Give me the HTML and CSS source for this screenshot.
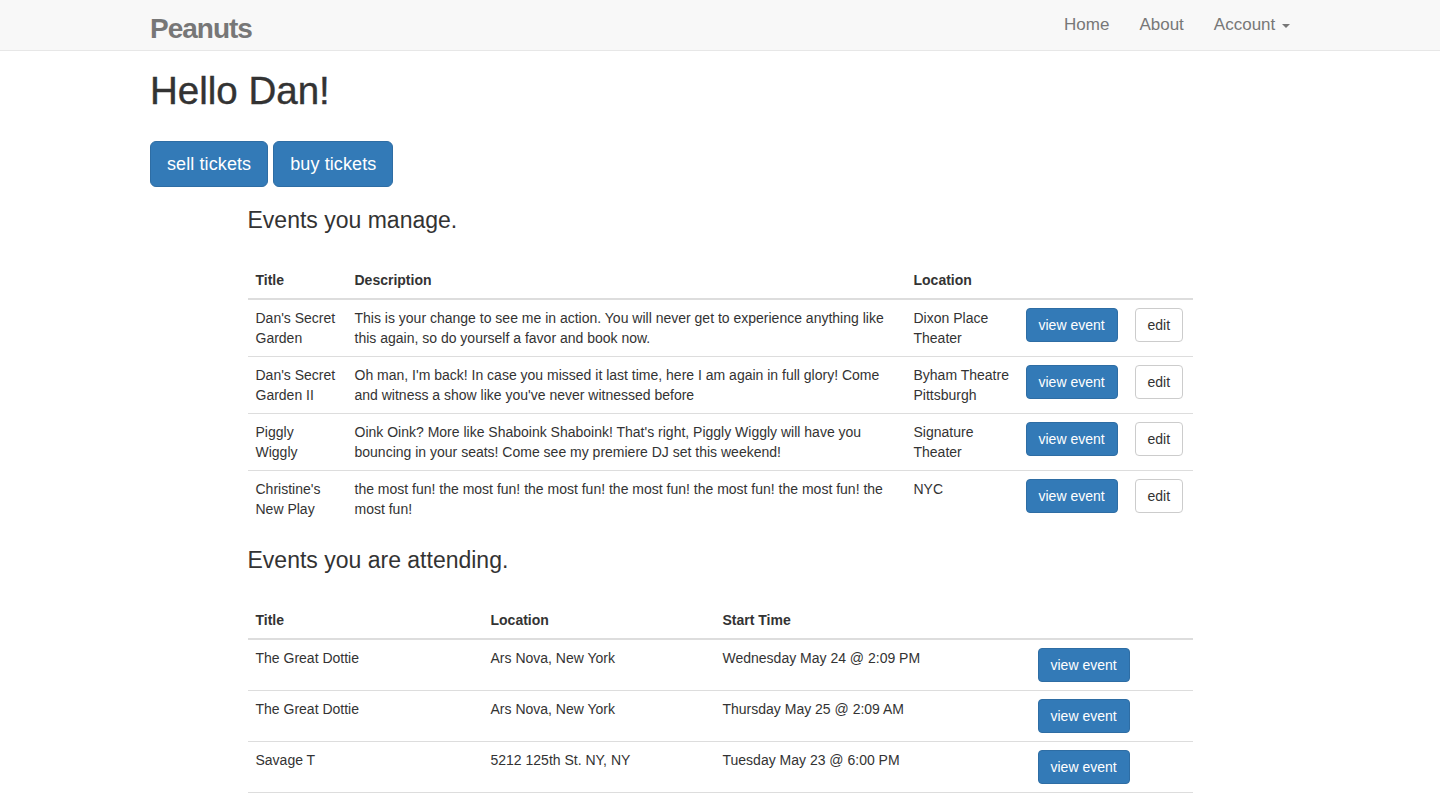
FILE: index.html
```html
<!DOCTYPE html>
<html lang="en">
<head>
<meta charset="utf-8">
<title>Peanuts</title>
<link rel="stylesheet" href="styles.css">
</head>
<body>
<nav class="navbar">
  <div class="container nav-inner">
    <a class="brand" href="#">Peanuts</a>
    <ul class="nav-links">
      <li><a href="#">Home</a></li>
      <li><a href="#">About</a></li>
      <li><a href="#">Account <span class="caret"></span></a></li>
    </ul>
  </div>
</nav>

<main class="container">
  <h1 class="greeting">Hello Dan!</h1>
  <div class="actions">
    <a class="btn btn-primary btn-lg" href="#">sell tickets</a>
    <a class="btn btn-primary btn-lg" href="#">buy tickets</a>
  </div>

  <section class="events">
    <h3 class="section-title">Events you manage.</h3>
    <table class="table">
      <colgroup>
        <col class="c-title1">
        <col class="c-desc">
        <col class="c-loc1">
        <col class="c-view1">
        <col class="c-edit">
      </colgroup>
      <thead>
        <tr><th>Title</th><th>Description</th><th>Location</th><th></th><th></th></tr>
      </thead>
      <tbody>
        <tr>
          <td>Dan's Secret Garden</td>
          <td>This is your change to see me in action. You will never get to experience anything like this again, so do yourself a favor and book now.</td>
          <td>Dixon Place Theater</td>
          <td><a class="btn btn-primary" href="#">view event</a></td>
          <td><a class="btn btn-default" href="#">edit</a></td>
        </tr>
        <tr>
          <td>Dan's Secret Garden II</td>
          <td>Oh man, I'm back! In case you missed it last time, here I am again in full glory! Come and witness a show like you've never witnessed before</td>
          <td>Byham Theatre Pittsburgh</td>
          <td><a class="btn btn-primary" href="#">view event</a></td>
          <td><a class="btn btn-default" href="#">edit</a></td>
        </tr>
        <tr>
          <td>Piggly Wiggly</td>
          <td>Oink Oink? More like Shaboink Shaboink! That's right, Piggly Wiggly will have you bouncing in your seats! Come see my premiere DJ set this weekend!</td>
          <td>Signature Theater</td>
          <td><a class="btn btn-primary" href="#">view event</a></td>
          <td><a class="btn btn-default" href="#">edit</a></td>
        </tr>
        <tr>
          <td>Christine's New Play</td>
          <td>the most fun! the most fun! the most fun! the most fun! the most fun! the most fun! the most fun!</td>
          <td>NYC</td>
          <td><a class="btn btn-primary" href="#">view event</a></td>
          <td><a class="btn btn-default" href="#">edit</a></td>
        </tr>
      </tbody>
    </table>

    <h3 class="section-title">Events you are attending.</h3>
    <table class="table table-attending">
      <colgroup>
        <col class="c-title2">
        <col class="c-loc2">
        <col class="c-time">
        <col class="c-view2">
      </colgroup>
      <thead>
        <tr><th>Title</th><th>Location</th><th>Start Time</th><th></th></tr>
      </thead>
      <tbody>
        <tr>
          <td>The Great Dottie</td>
          <td>Ars Nova, New York</td>
          <td>Wednesday May 24 @ 2:09 PM</td>
          <td><a class="btn btn-primary" href="#">view event</a></td>
        </tr>
        <tr>
          <td>The Great Dottie</td>
          <td>Ars Nova, New York</td>
          <td>Thursday May 25 @ 2:09 AM</td>
          <td><a class="btn btn-primary" href="#">view event</a></td>
        </tr>
        <tr>
          <td>Savage T</td>
          <td>5212 125th St. NY, NY</td>
          <td>Tuesday May 23 @ 6:00 PM</td>
          <td><a class="btn btn-primary" href="#">view event</a></td>
        </tr>
      </tbody>
    </table>
  </section>
</main>
</body>
</html>
```

FILE: styles.css
```css
* { box-sizing: border-box; }

html, body {
  margin: 0;
  padding: 0;
  background: #fff;
}

body {
  font-family: "Liberation Sans", Arial, Helvetica, sans-serif;
  font-size: 14px;
  line-height: 20px;
  color: #333;
}

a { text-decoration: none; }

.container {
  width: 1170px;
  margin: 0 auto;
  padding: 0 15px;
}

/* Navbar */
.navbar {
  height: 51px;
  background: #f8f8f8;
  border-bottom: 1px solid #e7e7e7;
}

.nav-inner {
  display: flex;
  justify-content: space-between;
  align-items: flex-start;
  height: 50px;
}

.brand {
  display: block;
  color: #777;
  font-weight: bold;
  font-size: 28px;
  letter-spacing: -1px;
  line-height: 30px;
  padding-top: 14px;
}

.nav-links {
  display: flex;
  list-style: none;
  margin: 0 -15px 0 0;
  padding: 0;
}

.nav-links a {
  display: block;
  padding: 15px;
  line-height: 20px;
  font-size: 17px;
  color: #777;
}

.caret {
  display: inline-block;
  width: 0;
  height: 0;
  margin-left: 2px;
  vertical-align: middle;
  border-top: 4px solid #777;
  border-left: 4px solid transparent;
  border-right: 4px solid transparent;
}

/* Greeting */
.greeting {
  margin: 18px 0 0;
  font-size: 38.5px;
  line-height: 43px;
  font-weight: 500;
  color: #333;
  -webkit-text-stroke: 0.4px #333;
}

.actions {
  margin-top: 29px;
  display: flex;
  gap: 5px;
}

.btn {
  display: inline-block;
  padding: 6px 12px;
  font-size: 14px;
  line-height: 20px;
  border: 1px solid transparent;
  border-radius: 4px;
  text-align: center;
  white-space: nowrap;
}

.btn-lg {
  padding: 10px 16px;
  font-size: 18px;
  line-height: 24px;
  letter-spacing: 0.1px;
  border-radius: 6px;
}

.btn-primary {
  color: #fff;
  background: #337ab7;
  border-color: #2e6da4;
}

.btn-default {
  color: #333;
  background: #fff;
  border-color: #ccc;
}

/* Events */
.events {
  margin: 0 97.5px;
}

.section-title {
  margin: 20px 0 29px;
  font-size: 23px;
  line-height: 26px;
  font-weight: 500;
  color: #333;
}

.table {
  width: 100%;
  table-layout: fixed;
  border-collapse: collapse;
  margin-bottom: 20px;
}

.table th,
.table td {
  padding: 8px;
  text-align: left;
  vertical-align: top;
  line-height: 20px;
}

.table th {
  font-weight: bold;
  border-bottom: 2px solid #ddd;
}

.table td {
  border-top: 1px solid #ddd;
}

.table-attending tbody tr:last-child td {
  border-bottom: 1px solid #ddd;
}

.c-title1 { width: 99px; }
.c-desc { width: 559px; }
.c-loc1 { width: 112px; }
.c-view1 { width: 109px; }
.c-edit { width: 66px; }

.c-title2 { width: 235px; }
.c-loc2 { width: 232px; }
.c-time { width: 315px; }
.c-view2 { width: 163px; }
```
